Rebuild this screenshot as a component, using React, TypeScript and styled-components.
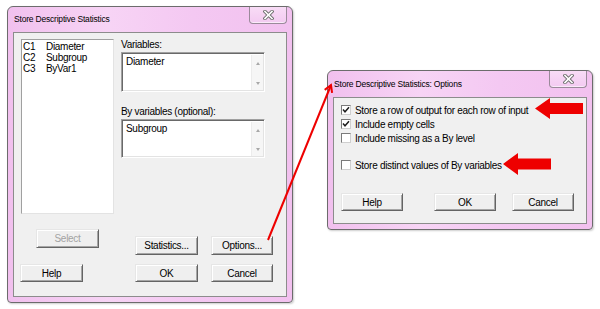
import React from 'react';
import styled, { createGlobalStyle } from 'styled-components';

const Global = createGlobalStyle`
	html, body {
		margin: 0;
		padding: 0;
		background: #ffffff;
	}
	body {
		font-family: "Liberation Sans", Arial, sans-serif;
		overflow: hidden;
	}
`;

const Page = styled.div`
	position: relative;
	width: 600px;
	height: 309px;
	box-sizing: border-box;
	padding: 6px 0 0 7px;
	display: flex;
	align-items: flex-start;
	gap: 34px;
`;

const Window = styled.div<{ $w: number; $top?: number }>`
	width: ${p => p.$w}px;
	margin-top: ${p => p.$top || 0}px;
	box-sizing: border-box;
	border: 1px solid #6c6c6c;
	border-radius: 6px 6px 4px 4px;
	padding: 0 5px 5px 5px;
	background: linear-gradient(to right, #f1c0ee 0%, #f7d4f5 35%, #f4c8f2 65%, #f2c1ef 100%);
	box-shadow: 1px 1px 2px rgba(0, 0, 0, 0.2);
`;

const TitleBar = styled.div<{ $h: number }>`
	height: ${p => p.$h}px;
	display: flex;
	justify-content: space-between;
	align-items: flex-start;
`;

const Title = styled.div`
	align-self: center;
	margin-top: -1px;
	font-size: 8.5px;
	letter-spacing: -0.2px;
	color: #000;
	padding-left: 1px;
	white-space: nowrap;
`;

const CloseBtn = styled.div`
	width: 38px;
	height: 17px;
	box-sizing: border-box;
	border: 1px solid #9a8a9a;
	border-top: none;
	border-radius: 0 0 4px 4px;
	background: linear-gradient(#f8dcf6, #f3caf1);
	display: flex;
	align-items: center;
	justify-content: center;
	box-shadow: inset 0 -1px 0 rgba(255, 255, 255, 0.6);
`;

const Client = styled.div<{ $pad: string }>`
	border: 1px solid #8c8c8c;
	background: #f0f0f0;
	padding: ${p => p.$pad};
	font-size: 10px;
	letter-spacing: -0.3px;
	color: #000;
`;

const TopRow = styled.div`
	display: flex;
	gap: 7px;
`;

const ListBox = styled.div`
	width: 93px;
	height: 175px;
	box-sizing: border-box;
	background: #fff;
	border: 1px solid;
	border-color: #a0a0a0 #e3e3e3 #e3e3e3 #a0a0a0;
	padding: 1px 0 0 1px;
`;

const ListItem = styled.div`
	display: flex;
	line-height: 11px;
	white-space: nowrap;
`;

const ColName = styled.span`
	width: 23px;
`;

const RightCol = styled.div`
	width: 144px;
	display: flex;
	flex-direction: column;
`;

const Label = styled.div<{ $mt?: number }>`
	line-height: 11px;
	margin-top: ${p => p.$mt || 0}px;
	margin-bottom: 2px;
	white-space: nowrap;
`;

const TextBox = styled.div<{ $h: number }>`
	height: ${p => p.$h}px;
	box-sizing: border-box;
	display: flex;
	background: #fff;
	border: 1px solid;
	border-color: #a0a0a0 #ffffff #ffffff #a0a0a0;
	box-shadow: inset 1px 1px 0 #696969, inset -1px -1px 0 #e3e3e3;
`;

const TextValue = styled.div`
	flex: 1;
	padding: 3px 0 0 4px;
	line-height: 11px;
`;

const Scroll = styled.div`
	width: 11px;
	margin: 2px 1px 1px 0;
	background: #f6f6f6;
	border-left: 1px solid #ececec;
	display: flex;
	flex-direction: column;
	justify-content: space-between;
	align-items: center;
	padding: 7px 0 5px;
`;

const Arrow = styled.span<{ $down?: boolean }>`
	width: 0;
	height: 0;
	border-left: 2.5px solid transparent;
	border-right: 2.5px solid transparent;
	${p => (p.$down ? 'border-top: 3px solid #a8a8a8;' : 'border-bottom: 3px solid #a8a8a8;')}
`;

const BtnRow = styled.div<{ $mt: number; $h: number }>`
	display: flex;
	align-items: flex-start;
	margin-top: ${p => p.$mt}px;
	height: ${p => p.$h}px;
`;

const LeftCell = styled.div<{ $center?: boolean }>`
	width: 93px;
	display: flex;
	justify-content: ${p => (p.$center ? 'center' : 'flex-start')};
`;

const Button = styled.div<{ $w?: number; $h?: number; $ml?: number; $mt?: number; $disabled?: boolean }>`
	width: ${p => p.$w || 63}px;
	height: ${p => p.$h || 19}px;
	margin-left: ${p => p.$ml || 0}px;
	margin-top: ${p => p.$mt || 0}px;
	box-sizing: border-box;
	flex-shrink: 0;
	display: flex;
	align-items: center;
	justify-content: center;
	background: #efefef;
	border: 1px solid;
	border-color: #e6e6e6 #646464 #646464 #e6e6e6;
	box-shadow: inset 1px 1px 0 #ffffff, inset -1px -1px 0 #a6a6a6;
	color: ${p => (p.$disabled ? '#a3a3a3' : '#000')};
	white-space: nowrap;
	font-size: 10px;
	letter-spacing: -0.3px;
`;

const CheckRow = styled.div<{ $mt?: number }>`
	display: flex;
	align-items: center;
	height: 14px;
	margin-top: ${p => p.$mt || 0}px;
	white-space: nowrap;
`;

const Box = styled.span`
	width: 10px;
	height: 10px;
	box-sizing: border-box;
	margin-right: 4px;
	background: #fff;
	border: 1px solid;
	border-color: #7a7a7a #cfcfcf #cfcfcf #7a7a7a;
	display: flex;
	align-items: center;
	justify-content: center;
`;

const Overlay = styled.svg`
	position: absolute;
	left: 0;
	top: 0;
	pointer-events: none;
`;

const CloseGlyph = () => (
	<svg width="11" height="10" viewBox="0 0 11 10">
		<path d="M2 1.5 L9 8.5 M9 1.5 L2 8.5" stroke="#6f6f6f" strokeWidth="3.4" strokeLinecap="square" />
		<path d="M2 1.5 L9 8.5 M9 1.5 L2 8.5" stroke="#ffffff" strokeWidth="1.6" strokeLinecap="square" />
	</svg>
);

const Check: React.FC<{ on?: boolean }> = ({ on }) => (
	<Box>
		{on && (
			<svg width="8" height="8" viewBox="0 0 8 8">
				<path d="M1 3.6 L3 5.8 L7 1.3" fill="none" stroke="#1e1e1e" strokeWidth="1.5" />
			</svg>
		)}
	</Box>
);

const ScrollBox: React.FC<{ h: number; value: string }> = ({ h, value }) => (
	<TextBox $h={h}>
		<TextValue>{value}</TextValue>
		<Scroll>
			<Arrow />
			<Arrow $down />
		</Scroll>
	</TextBox>
);

const columns = [
	['C1', 'Diameter'],
	['C2', 'Subgroup'],
	['C3', 'ByVar1'],
];

const options = [
	{ text: 'Store a row of output for each row of input', on: true, mt: 0 },
	{ text: 'Include empty cells', on: true, mt: 0 },
	{ text: 'Include missing as a By level', on: false, mt: 0 },
	{ text: 'Store distinct values of By variables', on: false, mt: 13 },
];

const App: React.FC = () => {
	return (
		<Page>
			<Global />
			<Window $w={286}>
				<TitleBar $h={25}>
					<Title>Store Descriptive Statistics</Title>
					<CloseBtn>
						<CloseGlyph />
					</CloseBtn>
				</TitleBar>
				<Client $pad="6px 0 14px 7px">
					<TopRow>
						<ListBox>
							{columns.map(([c, n]) => (
								<ListItem key={c}>
									<ColName>{c}</ColName>
									<span>{n}</span>
								</ListItem>
							))}
						</ListBox>
						<RightCol>
							<Label>Variables:</Label>
							<ScrollBox h={40} value="Diameter" />
							<Label $mt={14}>By variables (optional):</Label>
							<ScrollBox h={39} value="Subgroup" />
						</RightCol>
					</TopRow>
					<BtnRow $mt={15} $h={26}>
						<LeftCell $center>
							<Button $disabled>Select</Button>
						</LeftCell>
						<Button $ml={21} $mt={7}>Statistics...</Button>
						<Button $ml={13} $mt={7} $w={62}>Options...</Button>
					</BtnRow>
					<BtnRow $mt={9} $h={18}>
						<LeftCell>
							<Button $h={18} $ml={-1}>Help</Button>
						</LeftCell>
						<Button $h={18} $ml={21}>OK</Button>
						<Button $h={18} $ml={13} $w={62}>Cancel</Button>
					</BtnRow>
				</Client>
			</Window>

			<Window $w={266} $top={64}>
				<TitleBar $h={26}>
					<Title>Store Descriptive Statistics: Options</Title>
					<CloseBtn>
						<CloseGlyph />
					</CloseBtn>
				</TitleBar>
				<Client $pad="5px 8px 12px 7px">
					{options.map(o => (
						<CheckRow key={o.text} $mt={o.mt}>
							<Check on={o.on} />
							{o.text}
						</CheckRow>
					))}
					<BtnRow $mt={21} $h={18}>
						<Button $h={18} $w={62}>Help</Button>
						<Button $h={18} $w={62} $ml={31}>OK</Button>
						<Button $h={18} $w={62} $ml={16}>Cancel</Button>
					</BtnRow>
				</Client>
			</Window>

			<Overlay width="600" height="309" viewBox="0 0 600 309">
				<line x1="268" y1="240" x2="331" y2="85" stroke="#ee0000" strokeWidth="2" />
				<path d="M324.7 89.9 L331 85 L332.1 92.9" fill="none" stroke="#ee0000" strokeWidth="2" />
				<path d="M535 108.5 L550 98 L550 103 L583 103 L583 114 L550 114 L550 119 Z" fill="#ee0000" />
				<path d="M503 164 L518 153 L518 158.5 L551 158.5 L551 169.5 L518 169.5 L518 175 Z" fill="#ee0000" />
			</Overlay>
		</Page>
	);
};

export default App;
